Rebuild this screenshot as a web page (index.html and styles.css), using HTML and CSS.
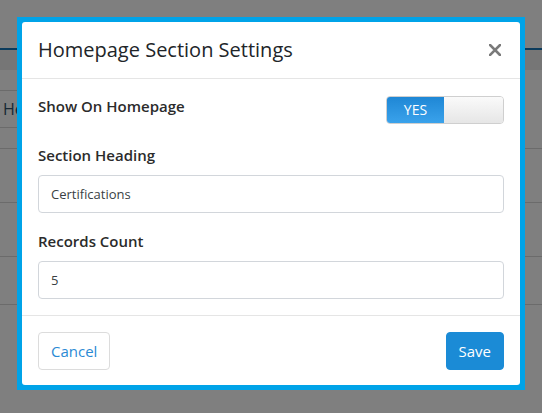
FILE: index.html
```html
<!DOCTYPE html>
<html>
<head>
    <meta charset="UTF-8">
    <title>Homepage Section Settings</title>
    <link rel="stylesheet" href="styles.css">
</head>
<body>
    <div class="page">
        <div class="topbar"></div>
        <div class="toolbar"></div>
        <div class="search-row">
            <div class="search-box">He</div>
        </div>
        <div class="list">
            <div class="list-row"></div>
            <div class="list-row"></div>
            <div class="list-row"></div>
        </div>
    </div>

    <div class="backdrop">
        <div class="dialog">
            <div class="dialog-content">
                <div class="dialog-header">
                    <h5 class="dialog-title">Homepage Section Settings</h5>
                    <button class="close" type="button" aria-label="Close">
                        <svg width="12" height="12" viewBox="0 0 12 12">
                            <path d="M1 1 L11 11 M11 1 L1 11" stroke="#7a7a7a" stroke-width="2.6" stroke-linecap="square"/>
                        </svg>
                    </button>
                </div>
                <div class="dialog-body">
                    <div class="field field-inline">
                        <label class="field-label">Show On Homepage</label>
                        <div class="switch">
                            <span class="switch-on">YES</span>
                            <span class="switch-off"></span>
                        </div>
                    </div>
                    <div class="field">
                        <label class="field-label">Section Heading</label>
                        <input class="input" type="text" value="Certifications">
                    </div>
                    <div class="field">
                        <label class="field-label">Records Count</label>
                        <input class="input" type="text" value="5">
                    </div>
                </div>
                <div class="dialog-footer">
                    <button class="btn btn-cancel" type="button">Cancel</button>
                    <button class="btn btn-save" type="button">Save</button>
                </div>
            </div>
        </div>
    </div>
</body>
</html>
```

FILE: styles.css
```css
body {
    margin: 0;
    font-family: 'Open Sans', 'Noto Sans', sans-serif;
    color: #212529;
    background: #fff;
    overflow: hidden;
}
.page {
    height: 413px;
}
.topbar {
    height: 48px;
    border-bottom: 2px solid #1676b9;
}
.toolbar {
    height: 20px;
    background: #ececec;
}
.search-row {
    padding-top: 20px;
    height: 58px;
}
.search-box {
    margin-left: -10px;
    width: 40px;
    height: 36px;
    border-top: 1px solid #d6d6d6;
    border-bottom: 1px solid #d6d6d6;
    padding-left: 13px;
    line-height: 36px;
    font-size: 16px;
    color: #2f4f6a;
    overflow: hidden;
}
.list-row {
    height: 53px;
    border-top: 1px solid #d6d6d6;
}
.list-row:last-child {
    height: 47px;
    border-bottom: 1px solid #d6d6d6;
}

/* modal */
.backdrop {
    position: fixed;
    top: 0;
    left: 0;
    right: 0;
    bottom: 0;
    background: rgba(0, 0, 0, 0.5);
    display: flex;
    justify-content: center;
    align-items: flex-start;
    padding-top: 17px;
}
.dialog {
    width: 498px;
    padding: 5px;
    background: #00a3e8;
}
.dialog-content {
    background: #fff;
    border-radius: 3px;
}
.dialog-header {
    display: flex;
    align-items: center;
    justify-content: space-between;
    height: 57px;
    padding: 0 16px;
    box-sizing: border-box;
    border-bottom: 1px solid #e5e5e5;
}
.dialog-title {
    margin: 0;
    font-size: 20px;
    font-weight: 500;
    line-height: 24px;
    color: #212529;
}
.close {
    border: 0;
    background: none;
    padding: 0;
    margin-right: 3px;
    width: 12px;
    height: 12px;
    display: flex;
}
.dialog-body {
    padding: 16px 16px 0;
    height: 236px;
    box-sizing: border-box;
}
.field {
    margin-bottom: 17px;
}
.field-inline {
    display: flex;
    justify-content: space-between;
    align-items: flex-start;
    margin-bottom: 20px;
}
.field-label {
    display: block;
    font-size: 15px;
    font-weight: 600;
    line-height: 22px;
    color: #2b2b2b;
    margin-bottom: 9px;
}
.field-inline .field-label {
    margin-bottom: 0;
}
.switch {
    margin-top: 1px;
    width: 118px;
    height: 28px;
    box-sizing: border-box;
    border: 1px solid #cfcfcf;
    border-radius: 4px;
    overflow: hidden;
    display: flex;
}
.switch-on {
    width: 57px;
    background: linear-gradient(to bottom, #1f87d5, #3aa2eb);
    color: #fff;
    font-size: 14px;
    line-height: 26px;
    text-align: center;
}
.switch-off {
    flex: 1;
    background: linear-gradient(to bottom, #fafafa, #e6e6e6);
}
.input {
    display: block;
    width: 100%;
    height: 38px;
    box-sizing: border-box;
    border: 1px solid #d2d6db;
    border-radius: 4px;
    padding: 0 12px;
    font-family: inherit;
    font-size: 13px;
    color: #3a3f44;
    outline: none;
}
.dialog-footer {
    display: flex;
    justify-content: space-between;
    padding: 16px 16px 15px;
    border-top: 1px solid #e5e5e5;
}
.btn {
    height: 38px;
    padding: 0 12px;
    border-radius: 4px;
    font-family: inherit;
    font-size: 15px;
    cursor: pointer;
}
.btn-cancel {
    background: #fff;
    border: 1px solid #dcdcdc;
    color: #2b8ad4;
}
.btn-save {
    background: #1b8bd6;
    border: 1px solid #1b8bd6;
    color: #fff;
}
```
